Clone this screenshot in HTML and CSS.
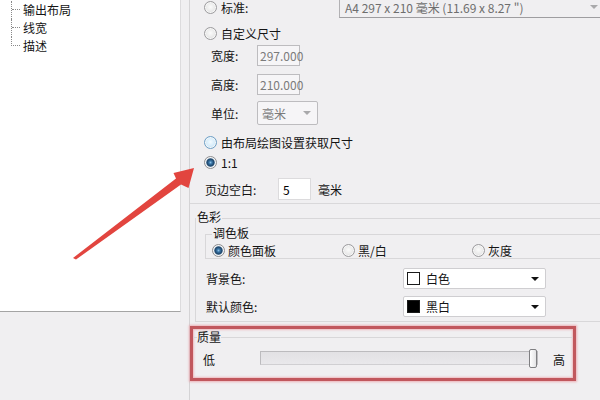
FILE: index.html
```html
<!DOCTYPE html>
<html lang="zh-CN">
<head>
<meta charset="utf-8">
<title>打印设置</title>
<link rel="stylesheet" href="styles.css">
</head>
<body>
<div class="app">
  <div class="tree">
    <ul class="tree-list">
      <li class="node"><span class="branch"></span><span class="node-text">输出布局</span></li>
      <li class="node"><span class="branch"></span><span class="node-text">线宽</span></li>
      <li class="node last"><span class="branch"></span><span class="node-text">描述</span></li>
    </ul>
  </div>
  <div class="right">
    <div class="upper">
      <div class="row std">
        <span class="radio"></span><span class="rlabel std-label">标准:</span>
        <div class="combo disabled">A4 297 x 210 毫米 (11.69 x 8.27 ")<span class="caret grey"></span></div>
      </div>
      <div class="row opt r2">
        <span class="radio"></span><span class="rlabel">自定义尺寸</span>
      </div>
      <div class="row size">
        <span class="flabel">宽度:</span><span class="field disabled">297.000</span>
      </div>
      <div class="row size r4">
        <span class="flabel">高度:</span><span class="field disabled">210.000</span>
      </div>
      <div class="row size r5">
        <span class="flabel">单位:</span><span class="field disabled unit-select">毫米<span class="caret grey"></span></span>
      </div>
      <div class="row opt r6">
        <span class="radio hover"></span><span class="rlabel">由布局绘图设置获取尺寸</span>
      </div>
      <div class="row opt r7">
        <span class="radio checked"></span><span class="rlabel">1:1</span>
      </div>
      <div class="row margin r8">
        <span class="mlabel">页边空白:</span><span class="field margin-input">5</span><span class="unit">毫米</span>
      </div>
    </div>

    <fieldset class="group color-group">
      <legend>色彩</legend>
      <fieldset class="subgroup">
        <legend>调色板</legend>
        <div class="palette">
          <div class="pal-item"><span class="radio checked"></span><span class="rlabel">颜色面板</span></div>
          <div class="pal-item"><span class="radio"></span><span class="rlabel">黑/白</span></div>
          <div class="pal-item"><span class="radio"></span><span class="rlabel">灰度</span></div>
        </div>
      </fieldset>
      <div class="row color-row c1">
        <span class="clabel">背景色:</span>
        <div class="cselect"><span class="swatch white"></span><span class="ctext">白色</span><span class="caret black"></span></div>
      </div>
      <div class="row color-row c2">
        <span class="clabel">默认颜色:</span>
        <div class="cselect"><span class="swatch black"></span><span class="ctext">黑白</span><span class="caret black"></span></div>
      </div>
    </fieldset>

    <div class="highlight">
      <fieldset class="quality">
        <legend>质量</legend>
        <div class="slider-row">
          <span class="slabel">低</span>
          <div class="track"><span class="thumb"></span></div>
          <span class="slabel high">高</span>
        </div>
      </fieldset>
    </div>
  </div>
</div>

<svg class="arrow" width="600" height="400" viewBox="0 0 600 400" aria-hidden="true">
  <polygon points="73,258 176,178.5 173.5,173 194,168 188.5,188 181,184.5 76,259.5" fill="#e2453f"/>
</svg>
</body>
</html>
```

FILE: styles.css
```css
* { box-sizing: border-box; }
html, body { margin: 0; padding: 0; }
body {
  width: 600px;
  height: 400px;
  overflow: hidden;
  position: relative;
  background: #f0eff1;
  font-family: "Noto Sans CJK SC", "Noto Sans", sans-serif;
  font-size: 12px;
  color: #141414;
}

.app { display: flex; align-items: flex-start; height: 400px; }

/* left tree */
.tree {
  flex: none;
  width: 181px;
  height: 312px;
  background: #fff;
  border-right: 1px solid #dcdbdd;
  border-bottom: 1px solid #a4a4a4;
  padding-top: 1px;
}
.tree-list { list-style: none; margin: 0; padding: 0 0 0 11px; }
.node {
  display: flex;
  align-items: flex-start;
  line-height: 18px;
  height: 18px;
  border-left: 1px dotted #8a8a8a;
}
.node.last { border-left: none; }
.branch {
  width: 8px;
  height: 9px;
  border-bottom: 1px dotted #8a8a8a;
  flex: none;
}
.node.last .branch { width: 9px; border-left: 1px dotted #8a8a8a; }
.node-text { margin-left: 3px; }

/* right panel */
.right {
  flex: 1;
  margin-left: 8px;
  height: 400px;
  border-left: 1px solid #d4d3d5;
  min-width: 0;
}
.upper {
  display: flex;
  flex-direction: column;
  margin-top: -4px;
  padding-bottom: 3px;
  border-bottom: 1px solid #d9d8da;
}
.row { display: flex; align-items: center; flex: none; }
.std { height: 22px; padding-left: 14px; }
.opt { height: 16px; padding-left: 14px; }
.r2 { margin-top: 4px; height: 22px; }
.size { height: 22px; padding-left: 21px; }
.r4 { margin-top: 7px; }
.r5 { margin-top: 6px; height: 24px; }
.r6 { margin-top: 9px; }
.r7 { margin-top: 4px; }
.margin { height: 22px; padding-left: 15px; }
.r8 { margin-top: 8px; }

.rlabel { margin-left: 4px; white-space: nowrap; }
.std-label { width: 118px; flex: none; }

.radio {
  flex: none;
  width: 13px;
  height: 13px;
  border-radius: 50%;
  border: 1px solid #9c9b9e;
  background: radial-gradient(circle at 50% 45%, #fbfbfb 0, #ececec 45%, #d2d2d4 100%);
  box-shadow: inset 0 0 0 1px #f7f7f7;
}
.radio.hover {
  border-color: #6e9fc6;
  background: radial-gradient(circle at 50% 45%, #f4fbff 0, #d6ecfa 50%, #a9d2ee 100%);
}
.radio.checked {
  border-color: #8d8d90;
  background: radial-gradient(circle at 50% 50%, #8fc1e6 0, #3b77a8 1.5px, #1e4468 3.5px, #7895b0 4.3px, #ececec 5px, #d8d8da 100%);
}

.combo {
  flex: none;
  display: flex;
  align-items: center;
  justify-content: space-between;
  width: 263px;
  height: 22px;
  padding: 0 3px 0 5px;
  border: 1px solid #b2b1b4;
  border-bottom-color: #9e9da0;
  color: #6e6e6e;
  white-space: nowrap;
}
.flabel { width: 46px; flex: none; }
.field {
  flex: none;
  display: flex;
  align-items: center;
  height: 21px;
  padding: 0 2px;
  border: 1px solid #bdbcbf;
  background: #f6f5f7;
}
.field.disabled { color: #7b7b7b; width: 43px; }
.field.unit-select {
  width: 61px;
  height: 24px;
  justify-content: space-between;
  padding: 0 6px 0 4px;
  border-radius: 2px;
}
.mlabel { width: 73px; flex: none; }
.margin-input {
  width: 33px;
  height: 22px;
  padding-left: 4px;
  background: #fff;
  border-color: #dcdbdd;
  color: #000;
}
.unit { margin-left: 7px; }

.caret {
  flex: none;
  width: 0;
  height: 0;
  border-left: 4px solid transparent;
  border-right: 4px solid transparent;
  border-top: 4px solid #a9a9ab;
}
.caret.black { border-top-color: #111; border-left-width: 4px; border-right-width: 4px; }

/* colour group */
.group, .subgroup, .quality { margin: 0; padding: 0; min-width: 0; }
.color-group {
  margin: 6px -20px 0 5px;
  padding: 0 0 4px 0;
  border: 1px solid #d8d7d9;
}
.color-group > legend {
  padding: 0 1px 2px;
  line-height: 14px;
}
.subgroup {
  margin-left: 9px;
  padding: 0 0 0 6px;
  border: 1px solid #d8d7d9;
}
.subgroup > legend {
  padding: 0 1px 2px;
  line-height: 14px;
}
.palette {
  display: grid;
  grid-template-columns: 130px 130px 130px;
  height: 16px;
}
.pal-item { display: flex; align-items: center; }
.pal-item .rlabel { margin-left: 3px; }

.color-row { height: 21px; padding-left: 10px; }
.c1 { margin-top: 9px; }
.c2 { margin-top: 7px; }
.clabel { width: 197px; flex: none; }
.cselect {
  flex: none;
  display: flex;
  align-items: center;
  width: 143px;
  height: 21px;
  padding: 0 6px 0 3px;
  background: #fff;
  border: 1px solid #cfced1;
  border-radius: 2px;
}
.swatch {
  flex: none;
  width: 13px;
  height: 13px;
  border: 1px solid #1a1a1a;
}
.swatch.white { background: #fff; }
.swatch.black { background: #000; }
.ctext { margin-left: 6px; flex: 1; }

/* quality (highlighted) */
.highlight {
  margin-top: 4px;
  width: 386px;
  border: 3px solid #c1575d;
  box-shadow: 0 0 2px 1px rgba(236, 150, 156, 0.7), inset 0 0 2px 1px rgba(236, 150, 156, 0.6);
}
.quality {
  padding: 0 0 10px 4px;
  border: 0;
  border-top: 1px solid #d8d7d9;
}
.quality > legend { padding: 0; line-height: 16px; }
.slider-row {
  display: flex;
  align-items: center;
  height: 20px;
  margin-top: 3px;
  padding-left: 6px;
}
.slabel { align-self: flex-end; line-height: 16px; flex: none; }
.slabel.high { margin-left: 15px; }
.track {
  position: relative;
  flex: none;
  margin-left: 45px;
  width: 278px;
  height: 14px;
  border: 1px solid #bcbbbe;
  border-bottom-color: #d0cfd2;
  background: linear-gradient(#e2e1e4, #e9e8eb);
}
.thumb {
  position: absolute;
  right: 0;
  top: -3px;
  width: 8px;
  height: 19px;
  border: 1px solid #7f7f82;
  border-radius: 2px;
  background: linear-gradient(90deg, #ffffff, #e4e4e6);
}

.arrow {
  position: absolute;
  left: 0;
  top: 0;
  pointer-events: none;
}
```
